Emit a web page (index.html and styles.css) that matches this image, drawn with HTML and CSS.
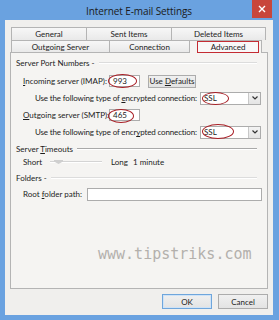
FILE: index.html
```html
<!DOCTYPE html>
<html>
<head>
<meta charset="utf-8">
<link rel="stylesheet" href="styles.css">
</head>
<body>
<div class="window">
  <div class="titlebar">
    <span class="tb-spacer"></span>
    <div class="title">Internet E-mail Settings</div>
    <div class="close">
      <svg width="8" height="8" viewBox="0 0 8 8"><path d="M1 1L7 7M7 1L1 7" stroke="#fff" stroke-width="1.4"/></svg>
    </div>
  </div>
  <div class="client">
    <div class="tabrow back">
      <div class="tab t-general">General</div>
      <div class="tab t-sent">Sent Items</div>
      <div class="tab t-deleted">Deleted Items</div>
    </div>
    <div class="tabrow front">
      <div class="tab t-out">Outgoing Server</div>
      <div class="tab t-conn">Connection</div>
      <div class="tab t-adv selected"><span class="adv-mark">Advanced</span></div>
    </div>
    <div class="panel">
      <div class="group g-ports"><span>Server Port Numbers -</span><i class="gline faint"></i></div>
      <div class="row r-in">
        <span class="lbl port-lbl"><u>I</u>ncoming server (IMAP):</span>
        <span class="field port"><span class="val">993</span><i class="ring ring-port"></i></span>
        <span class="btn defaults"><span>Use <u>D</u>efaults</span></span>
      </div>
      <div class="row r-enc">
        <span class="lbl enc-lbl">Use the following type of <u>e</u>ncrypted connection:</span>
        <span class="select"><span class="val">SSL</span><span class="drop"><svg width="6" height="4" viewBox="0 0 6 4"><path d="M0.5 0.5L3 3L5.5 0.5" fill="none" stroke="#333" stroke-width="1.2"/></svg></span><i class="ring ring-ssl"></i></span>
      </div>
      <div class="row r-out">
        <span class="lbl port-lbl"><u>O</u>utgoing server (SMTP):</span>
        <span class="field port"><span class="val">465</span><i class="ring ring-port2"></i></span>
      </div>
      <div class="row r-enc2">
        <span class="lbl enc-lbl">Use the following type of encr<u>y</u>pted connection:</span>
        <span class="select"><span class="val">SSL</span><span class="drop"><svg width="6" height="4" viewBox="0 0 6 4"><path d="M0.5 0.5L3 3L5.5 0.5" fill="none" stroke="#333" stroke-width="1.2"/></svg></span><i class="ring ring-ssl2"></i></span>
      </div>
      <div class="group g-time"><span>Server <u>T</u>imeouts</span><i class="gline"></i></div>
      <div class="row r-slider">
        <span class="lbl short">Short</span>
        <span class="slider"><i class="track"></i><i class="thumb"></i></span>
        <span class="long">Long</span>
        <span class="minute">1 minute</span>
      </div>
      <div class="group g-fold"><span>Folders -</span><i class="gline faint"></i></div>
      <div class="row r-root">
        <span class="lbl root-lbl">Root <u>f</u>older path:</span>
        <span class="field rootpath"></span>
      </div>
      <div class="watermark">www.tipstriks.com</div>
    </div>
    <div class="buttons">
      <span class="btn dlg ok">OK</span>
      <span class="btn dlg cancel">Cancel</span>
    </div>
  </div>
</div>
</body>
</html>
```
FILE: styles.css
```css
* { box-sizing: border-box; }
html, body { margin: 0; padding: 0; background: #6aa2e0; }
body { font-family: "Lato", "Open Sans", sans-serif; font-size: 8px; color: #1c1c1c; }
u { text-decoration: underline; text-underline-offset: 1px; }

.window {
  width: 279px; height: 320px;
  background: #6aa2e0;
  padding: 0 6px 5px 5px;
  display: flex; flex-direction: column;
}
.titlebar {
  height: 20px; flex: none;
  display: grid; grid-template-columns: 1fr auto 1fr; align-items: center;
}
.title { font-family: "Open Sans", sans-serif; font-size: 10px; color: #1a1a1a; letter-spacing: -0.1px; padding-top: 1px; }
.close {
  justify-self: end; align-self: start; margin-right: 1px;
  width: 20px; height: 18px; background: #c8463b;
  display: flex; align-items: center; justify-content: center;
}

.client {
  flex: 1; background: #f0efed;
  padding: 7px 5px 0 5px;
  display: flex; flex-direction: column;
}
.tabrow { display: flex; margin-left: 1px; }
.tabrow.back { height: 13px; }
.tabrow.front { height: 12px; }
.tab {
  border: 1px solid #b4b4b4; border-bottom: none;
  background: linear-gradient(#f7f7f7, #e9e9e9);
  display: flex; align-items: center; justify-content: center;
  line-height: 1; color: #222;
}
.tab + .tab { border-left: none; }
.t-general { width: 76px; }
.t-sent { width: 85px; }
.t-deleted { width: 94px; }
.t-out { width: 99px; }
.t-conn { width: 80px; }
.t-adv { width: 72px; }
.tab.selected { background: #f5f4f2; align-items: flex-end; justify-content: flex-start; position: relative; z-index: 1; margin-bottom: -1px; }
.adv-mark {
  margin-left: 7px; width: 62px; height: 12px;
  border: 1.5px solid #c42c33;
  display: flex; align-items: center; justify-content: center;
  background: #f8f8f8;
}

.panel {
  height: 237px; flex: none;
  border: 1px solid #b4b4b4; background: #f5f4f2;
  padding: 1px 5px 0 5px;
  display: flex; flex-direction: column;
}
.group { display: flex; align-items: center; height: 18px; flex: none; }
.g-time { height: 18px; }
.g-fold { height: 24px; }
.gline { flex: 1; height: 2px; border-top: 1px solid #a9a9a9; border-bottom: 1px solid #fff; margin: 0 5px 0 4px; }
.gline.faint { border-top-color: #dcdcdc; }

.row { display: flex; align-items: center; flex: none; }
.r-in, .r-out { height: 18px; }
.r-enc, .r-enc2 { height: 16px; }
.r-slider { height: 8px; }
.r-root { height: 8px; }

.lbl { flex: none; white-space: nowrap; }
.port-lbl { width: 86px; margin-left: 7px; }
.enc-lbl { width: 165px; margin-left: 19px; letter-spacing: -0.15px; }
.root-lbl { width: 64px; margin-left: 7px; }

.field {
  background: #fff; border: 1px solid #acacac; height: 12px;
  display: flex; align-items: center; padding-left: 3px; position: relative; flex: none;
}
.port { width: 31px; }
.rootpath { width: 175px; height: 13px; }
.val { line-height: 1; }

.btn {
  border: 1px solid #acacac; background: linear-gradient(#f0f0f0, #e3e3e3);
  display: flex; align-items: center; justify-content: center; line-height: 1; flex: none;
}
.defaults { width: 48px; height: 13px; margin-left: 8px; }

.select {
  width: 61px; height: 13px; background: #fff; border: 1px solid #acacac;
  display: flex; align-items: center; padding-left: 3px; position: relative; flex: none;
}
.select .val { flex: 1; }
.drop {
  width: 12px; height: 11px;
  border-left: 1px solid #c8c8c8; background: linear-gradient(#f3f3f3, #e4e4e4);
  display: flex; align-items: center; justify-content: center;
}

.ring { position: absolute; border: 1.5px solid #a81f26; border-radius: 50%; }
.ring-port { left: -2px; top: -2px; width: 29px; height: 14px; }
.ring-port2 { left: -2px; top: -1px; width: 26px; height: 14px; }
.ring-ssl { left: 1px; top: -1px; width: 27px; height: 13px; }
.ring-ssl2 { left: 1px; top: -3px; width: 32px; height: 15px; }

.short { margin-left: 7px; width: 27px; }
.slider { position: relative; width: 52px; height: 8px; flex: none; }
.track { position: absolute; left: 0; right: 0; top: 3px; height: 2px; background: #d4d4d4; border-bottom: 1px solid #fff; }
.thumb { position: absolute; left: 4px; top: 2px; width: 9px; height: 4px; background: #cfcfcf; clip-path: polygon(0 0, 100% 0, 100% 40%, 50% 100%, 0 40%); }
.long { margin-left: 9px; width: 22px; }

.watermark {
  margin-top: 46px; height: 20px; line-height: 20px; padding-left: 82px;
  font-family: "DejaVu Sans Mono", monospace; font-size: 15px; color: #b3b0ac; white-space: nowrap;
}

.buttons { display: flex; justify-content: flex-end; gap: 6px; margin-top: 5px; }
.dlg { width: 50px; height: 15px; }
.ok { border-color: #6fa6dc; box-shadow: inset 0 0 0 1px #cfe3f7; }
```
